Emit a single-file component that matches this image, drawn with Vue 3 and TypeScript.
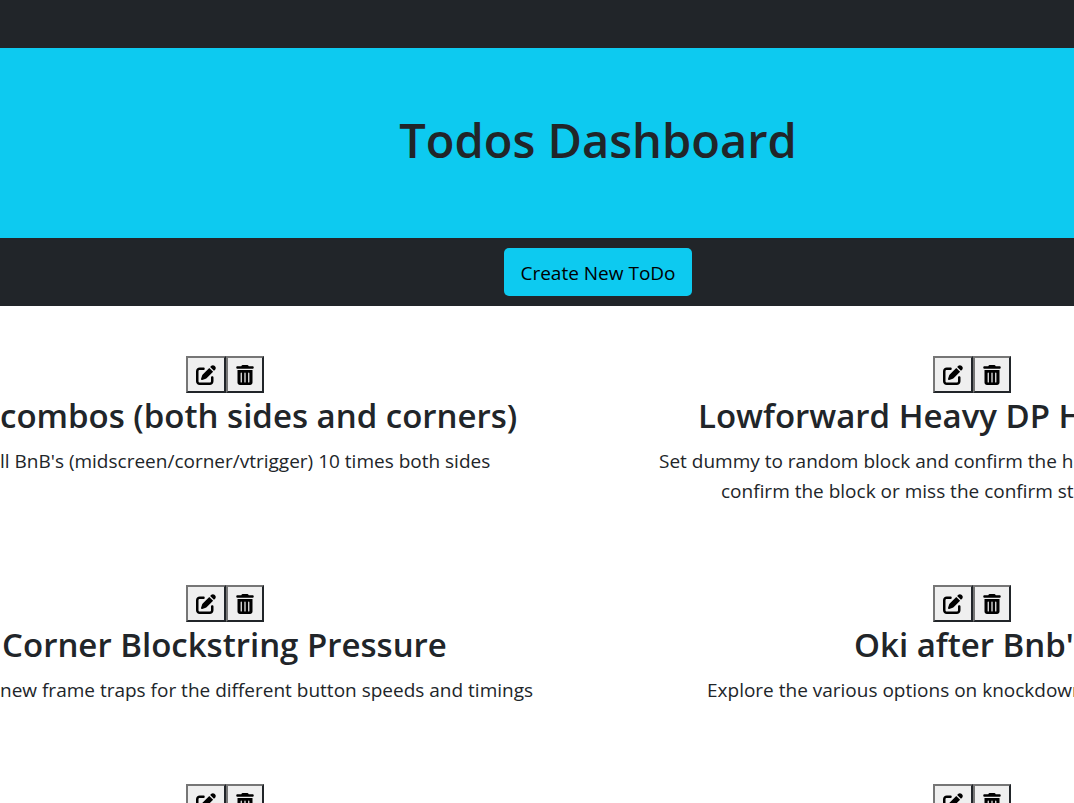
<script setup lang="ts">
interface Todo {
  id: number
  title: string
  lines: string[]
  layout: string
}

const todos: Todo[] = [
  { id: 1, title: 'combos (both sides and corners)', lines: ["ll BnB's (midscreen/corner/vtrigger) 10 times both sides"], layout: 'flush' },
  { id: 2, title: 'Lowforward Heavy DP H', lines: ['Set dummy to random block and confirm the h', 'confirm the block or miss the confirm sta'], layout: 'wide' },
  { id: 3, title: 'Corner Blockstring Pressure', lines: ['new frame traps for the different button speeds and timings'], layout: 'mixed' },
  { id: 4, title: "Oki after Bnb'", lines: ['Explore the various options on knockdown'], layout: 'short' },
  { id: 5, title: '', lines: [], layout: 'flush' },
  { id: 6, title: '', lines: [], layout: 'wide' },
]
</script>

<template>
  <div class="page">
    <nav class="topbar"></nav>
    <header class="hero"><h1>Todos Dashboard</h1></header>
    <div class="toolbar"><button type="button" class="create">Create New ToDo</button></div>
    <main class="todos">
      <article v-for="todo in todos" :key="todo.id" class="todo" :class="todo.layout">
        <div class="actions">
          <button type="button" aria-label="Edit">
            <svg width="20" height="20" viewBox="0 0 512 512"><path d="M471.6 21.7c-21.9-21.9-57.3-21.9-79.2 0L362.3 51.7l97.9 97.9 30.1-30.1c21.9-21.9 21.9-57.3 0-79.2L471.6 21.7zm-299.2 220c-6.1 6.1-10.8 13.6-13.5 21.9l-29.6 88.8c-2.9 8.6-.6 18.1 5.8 24.6s15.9 8.7 24.6 5.8l88.8-29.6c8.2-2.7 15.7-7.4 21.9-13.5L437.7 172.3 339.7 74.3 172.4 241.7zM96 64C43 64 0 107 0 160V416c0 53 43 96 96 96H352c53 0 96-43 96-96V320c0-17.7-14.3-32-32-32s-32 14.3-32 32v96c0 17.7-14.3 32-32 32H96c-17.7 0-32-14.3-32-32V160c0-17.7 14.3-32 32-32h96c17.7 0 32-14.3 32-32s-14.3-32-32-32H96z" /></svg>
          </button>
          <button type="button" aria-label="Delete">
            <svg width="18" height="20" viewBox="0 0 448 512"><path d="M135.2 17.7C140.6 6.8 151.7 0 163.8 0H284.2c12.1 0 23.2 6.8 28.6 17.7L320 32h96c17.7 0 32 14.3 32 32s-14.3 32-32 32H32C14.3 96 0 81.7 0 64S14.3 32 32 32h96l7.2-14.3zM32 128H416V448c0 35.3-28.7 64-64 64H96c-35.3 0-64-28.7-64-64V128zm96 64c-8.8 0-16 7.2-16 16V432c0 8.8 7.2 16 16 16s16-7.2 16-16V208c0-8.8-7.2-16-16-16zm96 0c-8.8 0-16 7.2-16 16V432c0 8.8 7.2 16 16 16s16-7.2 16-16V208c0-8.8-7.2-16-16-16zm96 0c-8.8 0-16 7.2-16 16V432c0 8.8 7.2 16 16 16s16-7.2 16-16V208c0-8.8-7.2-16-16-16z" /></svg>
          </button>
        </div>
        <h2 v-if="todo.title">{{ todo.title }}</h2>
        <p v-for="line in todo.lines" :key="line">{{ line }}</p>
      </article>
    </main>
  </div>
</template>

<style>
body {
  margin: 0;
  background: #fff;
}
</style>

<style scoped>
.page {
  height: 100vh;
  overflow: hidden;
  color: #212529;
  font-family: "Open Sans", "Noto Sans", sans-serif;
  font-size: 19px;
  line-height: 30px;
}
.topbar {
  height: 48px;
  background: #212529;
}
.hero,
.toolbar {
  display: flex;
  justify-content: center;
  padding-left: 122px;
}
.hero {
  padding-top: 62px;
  padding-bottom: 68px;
  background: #0dcaf0;
}
h1 {
  margin: 0;
  font-size: 47px;
  font-weight: 600;
  line-height: 60px;
}
.toolbar {
  padding-top: 10px;
  padding-bottom: 10px;
  background: #212529;
}
.create {
  padding: 10px 16px 8px;
  border: 0;
  border-radius: 5px;
  background: #0dcaf0;
  color: #000;
  font: inherit;
}
.todos {
  display: grid;
  grid-template-columns: 449px 748px;
  column-gap: 149px;
}
.todo {
  min-width: 0;
  padding: 50px 0 29px;
  white-space: nowrap;
}
.actions {
  display: flex;
  justify-content: center;
}
.actions button {
  display: flex;
  align-items: center;
  height: 37px;
  padding: 0 8px;
  border: 2px solid;
  border-color: #767676 #212529 #212529 #767676;
  background: #efefef;
  color: #000;
}
.actions svg {
  fill: currentColor;
}
h2 {
  margin: 0 0 8px;
  font-size: 33px;
  font-weight: 600;
  line-height: 45px;
}
p {
  margin: 0;
}
.mixed h2 {
  text-align: center;
}
.wide h2 {
  padding-left: 100px;
}
.wide p {
  padding-left: 61px;
}
.wide p + p {
  padding-left: 123px;
}
.short h2 {
  padding-left: 256px;
}
.short p {
  padding-left: 109px;
}
</style>
